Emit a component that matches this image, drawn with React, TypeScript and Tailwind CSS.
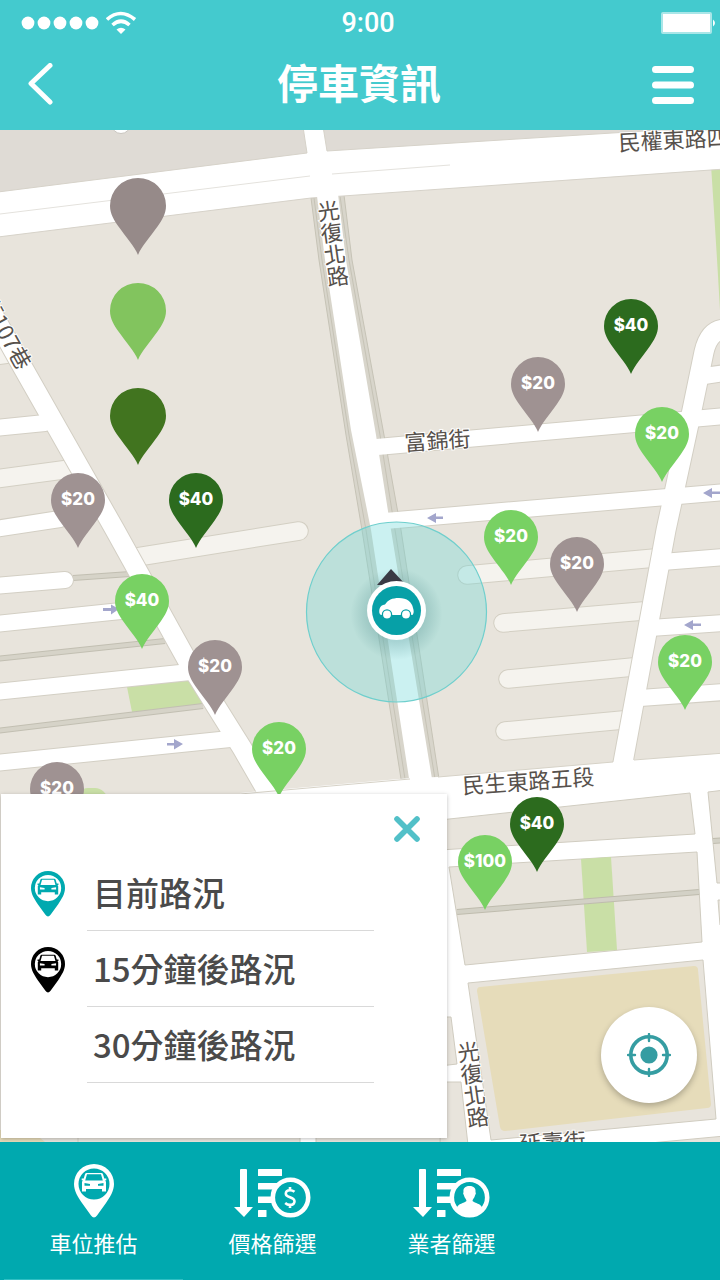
import { useState } from "react";

type Tone = "taupe" | "dark" | "green" | "plainTaupe" | "plainGreen" | "plainDark";

const toneClass: Record<Tone, string> = {
  taupe: "text-[#9f9292]",
  dark: "text-[#2c6b1e]",
  green: "text-[#78d163]",
  plainTaupe: "text-[#968a89]",
  plainGreen: "text-[#82c45e]",
  plainDark: "text-[#41741f]",
};

// x is the pin's centre and y its top edge, on a 720 x 1012 map.
const pins: { x: number; y: number; tone: Tone; price?: string }[] = [
  { x: 138, y: 48, tone: "plainTaupe" },
  { x: 138, y: 153, tone: "plainGreen" },
  { x: 138, y: 258, tone: "plainDark" },
  { x: 78, y: 343, tone: "taupe", price: "$20" },
  { x: 196, y: 343, tone: "dark", price: "$40" },
  { x: 538, y: 227, tone: "taupe", price: "$20" },
  { x: 631, y: 169, tone: "dark", price: "$40" },
  { x: 662, y: 277, tone: "green", price: "$20" },
  { x: 142, y: 444, tone: "green", price: "$40" },
  { x: 215, y: 510, tone: "taupe", price: "$20" },
  { x: 279, y: 592, tone: "green", price: "$20" },
  { x: 57, y: 632, tone: "taupe", price: "$20" },
  { x: 511, y: 380, tone: "green", price: "$20" },
  { x: 577, y: 407, tone: "taupe", price: "$20" },
  { x: 685, y: 505, tone: "green", price: "$20" },
  { x: 537, y: 667, tone: "dark", price: "$40" },
  { x: 485, y: 705, tone: "green", price: "$100" },
];

const smallRoads = [
  "M-5 428L45 423",
  "M-5 529L60 519",
  "M-5 586L65 580",
  "M-5 624L150 608",
  "M-5 692L190 672",
  "M-5 763L230 739",
  "M377 447L725 416",
  "M385 521L725 492",
  "M662 562L725 557",
  "M650 628L725 623",
  "M640 698L725 692",
  "M704 376L725 373",
];

const lightRoads = [
  "M-5 479L70 469",
  "M-5 356L8 354",
  "M137 557L299 531",
  "M467 575L655 558",
  "M503 623L643 611",
  "M508 679L633 667",
  "M505 731L623 720",
];

const lanes = [
  "M73 578L130 574",
  "M-5 659L165 641",
  "M-5 731L203 706",
];

const mainRoads = [
  "M-24 284L22 366L115 530L187 660L242 748L272 800",
  "M622 768L666 530L692 410L704 352Q709 330 725 329",
];

function StreetMap() {
  return (
    <svg
      className="absolute inset-0 h-full w-full"
      viewBox="0 130 720 1012"
      preserveAspectRatio="xMidYMid slice"
      role="img"
      aria-label="地圖"
    >
      <rect y="130" width="720" height="1012" fill="#e8e4dc" />
      <path d="M0 130H720V140L326 160L0 200Z" fill="#dfdbd5" />
      <circle cx="121" cy="124" r="9.5" fill="#fff" stroke="#c9c5bf" />
      <path d="M711 165H720V310Q716 240 711 165Z" fill="#c9dfa6" />

      <g fill="none" stroke="#d3cfc3">
        {lightRoads.map((d) => (
          <path key={d} d={d} strokeWidth="19.5" strokeLinecap="round" />
        ))}
      </g>
      <g fill="none" stroke="#f5f3ee">
        {lightRoads.map((d) => (
          <path key={d} d={d} strokeWidth="17.5" strokeLinecap="round" />
        ))}
      </g>

      <path d="M127 687L195 680L205 704L132 712Z" fill="#c9dfa6" />
      <rect x="76" y="788" width="31" height="30" rx="12" fill="#c9dfa6" />

      <g fill="none">
        {lanes.map((d) => (
          <g key={d}>
            <path d={d} stroke="#c2bfb2" strokeWidth="6" />
            <path d={d} stroke="#d6d3c8" strokeWidth="4" />
          </g>
        ))}
      </g>

      <g fill="none" stroke="#d3cfc4">
        {smallRoads.map((d) => (
          <path key={d} d={d} strokeWidth="18" strokeLinecap="round" />
        ))}
        {mainRoads.map((d) => (
          <path key={d} d={d} strokeWidth="21" />
        ))}
      </g>

      <path
        d="M311 198L319 260L346 435L362 530L401 779H439L401 530L384 435L352 260L344 195Z"
        fill="#d8d5cb"
        stroke="#c6c3b6"
      />
      <path
        d="M314 198L322 260L349 435L366 530L405 779M340 196L349 260L380 435L395 530L435 779"
        fill="none"
        stroke="#c6c3b6"
      />

      <path d="M-2 192L307 153L302 120H322L327 151L660 130H725V169L343 196L311 198L-2 237Z" fill="#fff" stroke="#d6d2c9" />
      <path d="M0 214L310 176M332 174L450 165" stroke="#e4e2dd" fill="none" />
      <path d="M317 196L325 260L351 430L371 530L410 785H433L391 530L376 435L346 260L338 194Z" fill="#fff" />

      <g fill="none" stroke="#fff">
        {smallRoads.map((d) => (
          <path key={d} d={d} strokeWidth="16" strokeLinecap="round" />
        ))}
        {mainRoads.map((d) => (
          <path key={d} d={d} strokeWidth="19" />
        ))}
      </g>

      <path d="M240 793L410 778L438 777L613 762L632 760L725 753V1150H310V1142L240 1142Z" fill="#fff" />
      <path d="M240 794L410 779M438 777L613 762M634 760L725 753" stroke="#d6d2c7" />

      <g fill="#e8e4dc" stroke="#d0ccc0">
        <path d="M440 820L690 793L695 834L440 850Z" />
        <path d="M449 867L697 852L702 942L465 965Z" />
        <path d="M708 792L725 790V883L717 883Z" />
        <path d="M725 900H718L720 925H725Z" />
        <path d="M440 1017H451L457 1064L440 1066Z" />
        <path d="M440 1082H461L468 1145H440Z" />
        <path d="M468 983L703 960L716 1119L491 1140Z" />
        <path d="M78 1136H300V1146H78Z" />
        <path d="M316 1130H440V1146H316Z" />
        <path d="M650 1143L725 1136V1146H650Z" />
      </g>
      <path d="M0 1130H30L45 1142H0Z" fill="#e5dab8" />
      <path d="M581 859L611 857L617 950L587 952Z" fill="#c9dfa6" />
      <path d="M457 912L699 892M713 841L725 840" stroke="#bfbcae" strokeWidth="6" />
      <path d="M457 912L699 892M713 841L725 840" stroke="#d3d1c6" strokeWidth="4" />
      <path d="M480 987L694 966Q698 966 698 970L711 1104Q711 1108 707 1108L505 1131Q501 1131 500 1127L477 991Q477 987 480 987Z" fill="#e6dcba" />

      <g fill="#a3a6cc">
        <path d="M427 518L436 513V516.500H443V519H436V523Z" />
        <path d="M703 493L712 488V491.500H720V494H712V498Z" />
        <path d="M684 625L693 620V623.500H701V626H693V630Z" />
        <path d="M183 744L174 739V743H167V745.500H174V749.500Z" />
        <path d="M119 609L111 604.500V608H103V611H111V614.500Z" />
      </g>

      <g className="font-['Noto_Sans_CJK_TC',sans-serif] text-[22px]" fill="#57514c" stroke="#fff" strokeWidth="2" paintOrder="stroke">
        <text transform="translate(619 151) rotate(-3)">民權東路四段</text>
        <text transform="translate(405 451) rotate(-4)">富錦街</text>
        <text transform="translate(463 794) rotate(-4)">民生東路五段</text>
        <text transform="translate(-21 301) rotate(61)">街107巷</text>
        <text transform="translate(520 1152) rotate(-3)">延壽街</text>
        <text className="[writing-mode:vertical-rl]" transform="translate(327 200) rotate(-8)">光復北路</text>
        <text className="[writing-mode:vertical-rl]" transform="translate(467 1041) rotate(-8)">光復北路</text>
      </g>

      <defs>
        <radialGradient id="glow">
          <stop offset="0.6" stopColor="#4d8a8a" stopOpacity="0.28" />
          <stop offset="1" stopColor="#4d8a8a" stopOpacity="0" />
        </radialGradient>
      </defs>
      <circle cx="396.5" cy="612" r="90" fill="#6fd9d9" fillOpacity="0.36" stroke="#6fcfcd" strokeWidth="1.2" />
      <circle cx="396.5" cy="614" r="46" fill="url(#glow)" />
      <path d="M391 569L406 585H377Z" fill="#3a3a44" />
      <circle cx="396.5" cy="610.5" r="29.5" fill="#fff" />
      <circle cx="396.5" cy="610.5" r="24.5" fill="#07a0a7" />
      <path
        d="M379.500 609C380.500 606 382 605 385 604.500C388 600 392 598 399 598C407 598 412 602 413 608C414 611 414 613 412.500 615H381C379 614 379 611 379.500 609Z"
        fill="#fff"
      />
      <g fill="#fff" stroke="#07a0a7" strokeWidth="1.3">
        <circle cx="387" cy="614.500" r="4.600" />
        <circle cx="406" cy="614.500" r="4.600" />
      </g>
    </svg>
  );
}

function Pin({ x, y, tone, price }: { x: number; y: number; tone: Tone; price?: string }) {
  return (
    <button
      type="button"
      aria-label={price ? `停車場 ${price}` : "停車場"}
      className={`absolute -translate-x-1/2 ${toneClass[tone]}`}
      style={{ left: `${(x / 720) * 100}%`, top: `${(y / 1012) * 100}%` }}
    >
      <svg className={price ? "h-[75px] w-[54px]" : "h-[77px] w-14"} viewBox="0 0 54 75" preserveAspectRatio="none" fill="currentColor" aria-hidden="true">
        <path d="M27 0A27 27 0 0 0 0 27C0 35 4 41 8 47C15 57 24 67 27 75C30 67 39 57 46 47C50 41 54 35 54 27A27 27 0 0 0 27 0Z" />
      </svg>
      {price && (
        <span className="absolute inset-x-0 top-4 text-center font-['Inter',sans-serif] text-[17px] leading-5 font-extrabold text-white">
          {price}
        </span>
      )}
    </button>
  );
}

function CarPin({ className }: { className: string }) {
  return (
    <svg className={className} viewBox="0 0 40 54" fill="currentColor" aria-hidden="true">
      <path
        fillRule="evenodd"
        d="M20 0A20 20 0 0 0 0 20C0 27 4 33 8 39L17 51.500Q20 55.500 23 51.500L32 39C36 33 40 27 40 20A20 20 0 0 0 20 0ZM20 4.500A15.500 15.500 0 1 1 20 35.500A15.500 15.500 0 0 1 20 4.500Z"
      />
      <path
        fillRule="evenodd"
        d="M12.500 9H27.500Q28.500 9 29 10.200L30.300 14.500H32.300V16.300H31.200L32 18V27.500H28V25H12V27.500H8V18L8.800 16.300H7.700V14.500H9.700L11 10.200Q11.500 9 12.500 9ZM13 10.300L11.200 16.500H28.800L27 10.300ZM10.500 19V21.800H16V20ZM29.500 19V21.800H24V20Z"
      />
    </svg>
  );
}

function SortBase() {
  return (
    <>
      <path d="M7 0H12Q13 0 13 1V38H19L10 48L0 38H6V1Q6 0 7 0Z" />
      <rect x="24" width="24" height="7" rx="0.5" />
      <rect x="24" y="14" width="20" height="6.500" rx="0.5" />
      <rect x="24" y="27.500" width="18" height="6.500" rx="0.5" />
      <rect x="24" y="41" width="8.500" height="7" rx="0.5" />
      <circle cx="56.500" cy="28.500" r="17.700" fill="#00a9af" stroke="currentColor" strokeWidth="4.600" />
    </>
  );
}

function PriceSortIcon() {
  return (
    <svg className="h-[50px] w-[78px]" viewBox="0 -1 78 50" fill="currentColor" aria-hidden="true">
      <SortBase />
      <path
        d="M60.500 22.800Q58.500 21.200 56 21.200C53.500 21.200 51.800 22.600 51.800 24.700C51.800 29 60.500 27.400 60.500 32.200C60.500 34.600 58.500 35.900 56 35.900Q53.300 35.900 51.200 34M56 18V21.200M56 35.900V39"
        fill="none"
        stroke="currentColor"
        strokeWidth="2.600"
      />
    </svg>
  );
}

function OperatorSortIcon() {
  return (
    <svg className="h-[50px] w-[78px]" viewBox="0 -1 78 50" fill="currentColor" aria-hidden="true">
      <SortBase />
      <path d="M56.500 17C52 17 50 19.500 50.500 23Q49.500 24 51 26.500C51.500 29 53.500 30 53.500 32C51 34.500 45 34.500 44 38.500Q49 45.500 56.500 45.500Q64 45.500 69 38.500C68 34.500 62 34.500 59.500 32C59.500 30 61.500 29 62 26.500Q63.500 24 62.500 23C63 19.500 61 17 56.500 17Z" />
    </svg>
  );
}

const traffic = [
  { label: "目前路況", icon: "text-[#00a9af]" },
  { label: "15分鐘後路況", icon: "text-black" },
  { label: "30分鐘後路況", icon: "" },
];

export default function App() {
  const [open, setOpen] = useState(true);

  return (
    <div className="flex min-h-screen flex-col font-['Noto_Sans_CJK_TC',sans-serif]">
      <header className="flex h-[130px] flex-col bg-[#44cace] text-white">
        <div className="grid h-[46px] grid-cols-[1fr_auto_1fr] items-center pr-1 pl-5">
          <div className="flex items-center gap-1.5">
            <svg className="h-4 w-20" viewBox="0 0 80 16" fill="currentColor" aria-hidden="true">
              {[8, 24, 40, 56, 72].map((cx) => (
                <circle key={cx} cx={cx} cy="8" r="6.400" />
              ))}
            </svg>
            <svg className="h-6 w-8" viewBox="0 0 32 24" fill="none" stroke="currentColor" strokeWidth="3.600" aria-hidden="true">
              <path d="M1 8.500Q14.500-3.500 29 8.500M6.500 14Q15 6.500 23.500 14" />
              <path d="M10.500 18.500Q15 15 19.500 18.500L15 23Z" fill="currentColor" stroke="none" />
            </svg>
          </div>
          <span className="font-['Roboto',sans-serif] text-[27px] leading-8 font-medium">9:00</span>
          <svg className="h-[22px] w-[55px] justify-self-end" viewBox="0 0 55 22" aria-hidden="true">
            <rect x="1" y="1" width="49" height="20" rx="1" fill="#fff" stroke="#a9e6e8" strokeWidth="2" />
            <path d="M52 7.500Q56 11 52 14.500Z" fill="#fff" />
          </svg>
        </div>
        <div className="flex flex-1 items-center justify-between pr-[26px] pb-1.5 pl-6">
          <button type="button" aria-label="返回" className="flex w-11">
            <svg className="h-11 w-8" viewBox="0 0 32 44" fill="none" stroke="currentColor" strokeWidth="5" strokeLinecap="round" strokeLinejoin="round" aria-hidden="true">
              <path d="M26 2.500L7 20.500L26 39" />
            </svg>
          </button>
          <h1 className="pb-2 text-[41px] leading-[52px] font-bold">停車資訊</h1>
          <button type="button" aria-label="選單" className="flex w-11 justify-end">
            <svg className="h-10 w-[42px]" viewBox="0 0 42 40" stroke="currentColor" strokeWidth="7" strokeLinecap="round" aria-hidden="true">
              <path d="M3.500 4.500H38.500M3.500 20H38.500M3.500 35.500H38.500" />
            </svg>
          </button>
        </div>
      </header>

      <main className="relative flex flex-1 flex-col overflow-hidden">
        <StreetMap />
        {pins.map((pin) => (
          <Pin key={`${pin.x}-${pin.y}`} {...pin} />
        ))}

        <button
          type="button"
          aria-label="我的位置"
          className="absolute right-[23px] bottom-[39px] flex size-24 items-center justify-center rounded-full bg-white text-[#359da2] shadow-[0_3px_6px_rgba(0,0,0,0.25)]"
        >
          <svg className="size-11" viewBox="0 0 44 44" fill="none" stroke="currentColor" aria-hidden="true">
            <circle cx="22" cy="22" r="18.200" strokeWidth="3.600" />
            <circle cx="22" cy="22" r="8.600" fill="currentColor" stroke="none" />
            <path d="M22 1V8M22 36V43M1 22H8M36 22H43" strokeWidth="2.400" strokeLinecap="round" />
          </svg>
        </button>

        {open && (
          <section aria-label="路況" className="absolute bottom-1 left-px w-[62%] bg-white pb-[55px] shadow-[0_1px_4px_rgba(0,0,0,0.25)]">
            <div className="flex h-[61px] items-center justify-end pt-2 pr-6">
              <button type="button" aria-label="關閉" onClick={() => setOpen(false)}>
                <svg className="size-8" viewBox="0 0 32 32" stroke="#52c0c8" strokeWidth="5.600" strokeLinecap="round" aria-hidden="true">
                  <path d="M6 6L26 26M26 6L6 26" />
                </svg>
              </button>
            </div>
            <ul className="pr-[73px]">
              {traffic.map(({ label, icon }) => (
                <li key={label}>
                  <button type="button" className="flex h-[76px] w-full items-center text-left text-[#4a4a4a]">
                    <span className="flex w-[86px] shrink-0 pt-0.5 pl-[30px]">
                      {icon && (
                        <span className={icon}>
                          <CarPin className="h-[46px] w-[34px]" />
                        </span>
                      )}
                    </span>
                    <span className="flex h-full flex-1 items-center border-b border-[#d9d9d9] pl-1.5 text-[33px] font-medium whitespace-nowrap">
                      {label}
                    </span>
                  </button>
                </li>
              ))}
            </ul>
          </section>
        )}
      </main>

      <nav className="grid h-[138px] grid-cols-4 bg-[#00a9af] pl-1 text-[22px] leading-8 text-white">
        <button type="button" className="flex flex-col items-center border-b border-[#2fbfc4] pt-[22px]">
          <span className="flex h-[54px] items-end">
            <CarPin className="h-[54px] w-10" />
          </span>
          <span className="mt-2">車位推估</span>
        </button>
        <button type="button" className="flex flex-col items-center pt-[22px]">
          <span className="flex h-[54px] items-end">
            <PriceSortIcon />
          </span>
          <span className="mt-2">價格篩選</span>
        </button>
        <button type="button" className="flex flex-col items-center pt-[22px]">
          <span className="flex h-[54px] items-end">
            <OperatorSortIcon />
          </span>
          <span className="mt-2">業者篩選</span>
        </button>
      </nav>
    </div>
  );
}
